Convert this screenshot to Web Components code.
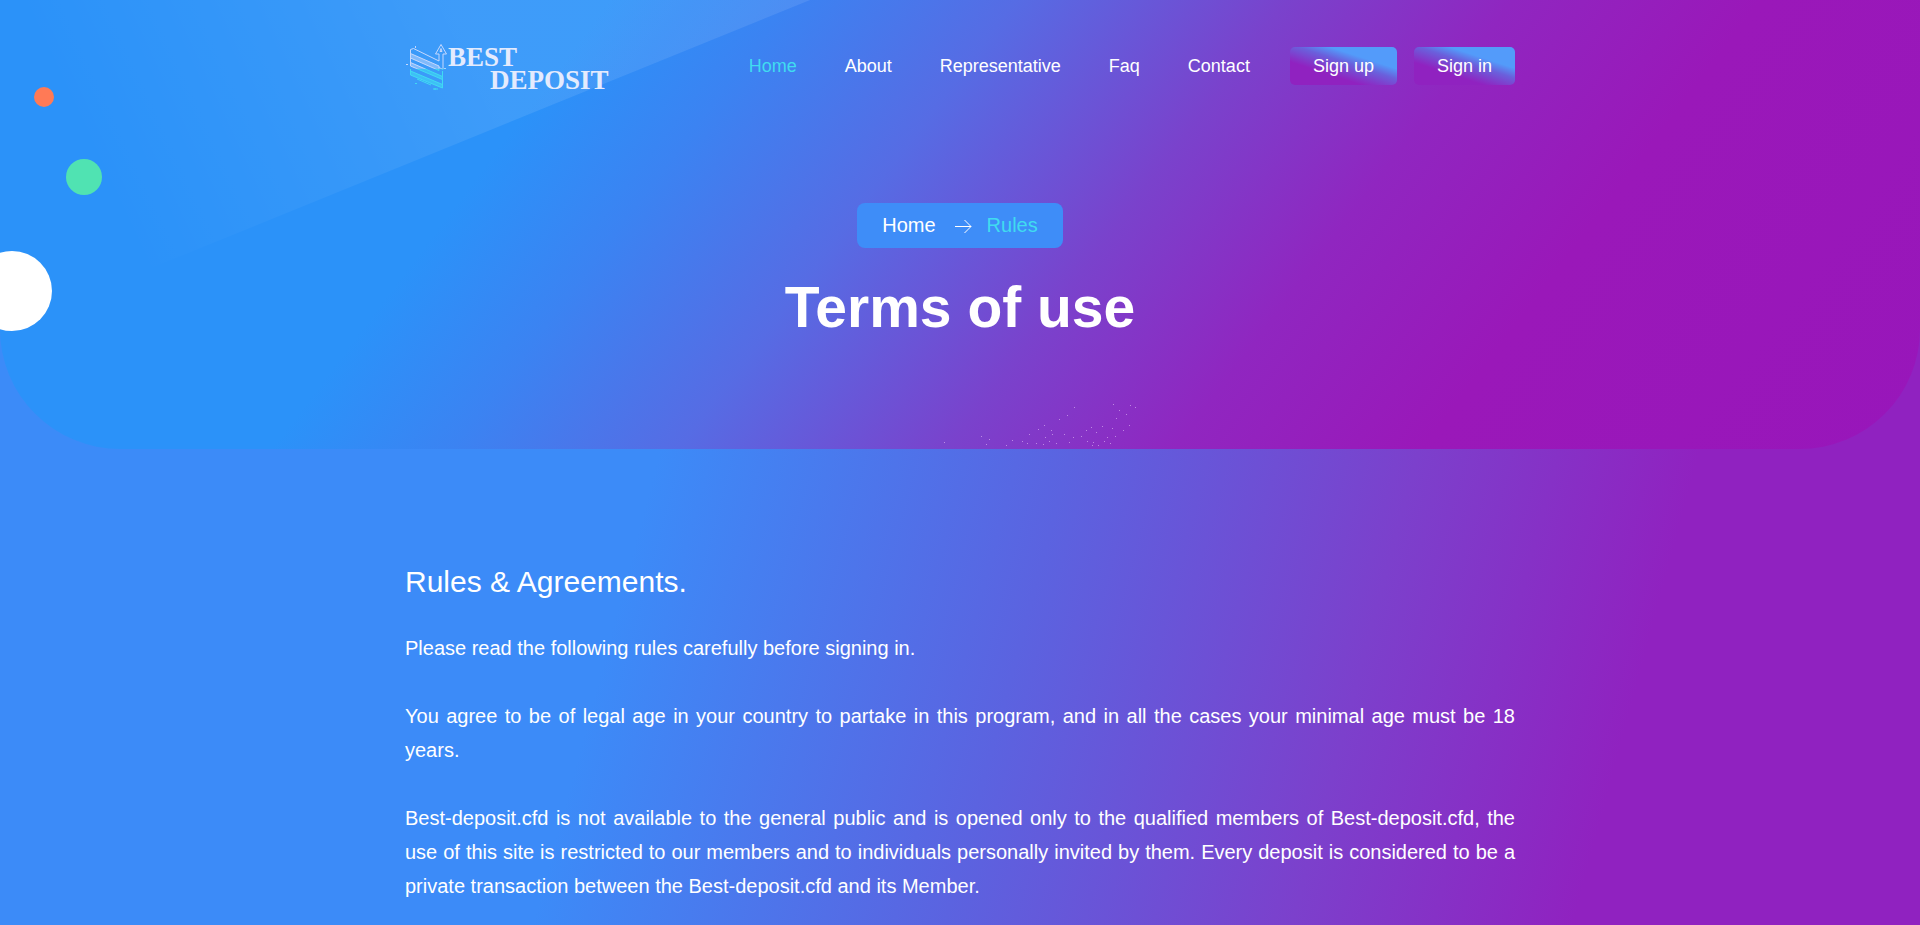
<!DOCTYPE html>
<html lang="en">
<head>
<meta charset="UTF-8">
<meta name="viewport" content="width=device-width, initial-scale=1">
<title>Best Deposit - Terms of use</title>
<style>
  :root {
    --sans: "Liberation Sans", Arial, sans-serif;
    --serif: "Liberation Serif", "Times New Roman", serif;
    --cyan: #40dcf0;
    --blue: #3c8bf8;
    --purple: #9022c0;
    --container: 1110px;
  }

  body {
    margin: 0;
    min-height: 100vh;
    font-family: var(--sans);
    font-size: 20px;
    line-height: 34px;
    color: #fff;
    background: linear-gradient(105deg, var(--blue) 36%, #5b63e0 55%, #7c40cc 71%, var(--purple) 84%);
  }
</style>
</head>
<body>

<page-hero>
  <site-header slot="header">
    <nav-link href="#home" active>Home</nav-link>
    <nav-link href="#about">About</nav-link>
    <nav-link href="#representative">Representative</nav-link>
    <nav-link href="#faq">Faq</nav-link>
    <nav-link href="#contact">Contact</nav-link>
    <action-button slot="actions">Sign up</action-button>
    <action-button slot="actions">Sign in</action-button>
  </site-header>
  <bread-crumb home="Home" current="Rules"></bread-crumb>
  <span slot="title">Terms of use</span>
</page-hero>

<rules-section>
  <span slot="title">Rules &amp; Agreements.</span>
  <p>Please read the following rules carefully before signing in.</p>
  <p>You agree to be of legal age in your country to partake in this program, and in all the cases your minimal age must be 18 years.</p>
  <p>Best-deposit.cfd is not available to the general public and is opened only to the qualified members of Best-deposit.cfd, the use of this site is restricted to our members and to individuals personally invited by them. Every deposit is considered to be a private transaction between the Best-deposit.cfd and its Member.</p>
</rules-section>

<script>
/**
 * <site-logo> — Brand mark and name
 */
class SiteLogo extends HTMLElement {
  connectedCallback() {
    this.attachShadow({ mode: 'open' }).innerHTML = `
      <style>
        :host { display: block; flex-shrink: 0; }
        a { display: block; }
        svg { display: block; }
        text {
          font-family: var(--serif);
          font-size: 27px;
          font-weight: 700;
          fill: #e4ebfd;
        }
      </style>
      <a href="#home" aria-label="Best Deposit">
        <svg width="206" height="56" viewBox="0 0 206 56" fill="none">
          <defs>
            <linearGradient id="ink" gradientUnits="userSpaceOnUse" x1="0" y1="0" x2="0" y2="56">
              <stop offset="0.54" stop-color="#c6d8fd"/>
              <stop offset="0.56" stop-color="#3fdaf2"/>
            </linearGradient>
            <linearGradient id="tint" gradientUnits="userSpaceOnUse" x1="0" y1="0" x2="0" y2="56">
              <stop offset="0.54" stop-color="#d3e0fd" stop-opacity="0.45"/>
              <stop offset="0.56" stop-color="#3fdaf2" stop-opacity="0.6"/>
            </linearGradient>
          </defs>
          <g stroke="url(#ink)" fill="url(#tint)">
            <path d="M5.500 15.500L34 28v4.500L5.500 20z"/>
            <path d="M5.500 24.500L37.500 38.500v3L5.500 28z"/>
            <path d="M5.500 33L37.500 46.500V50L5.500 37z"/>
          </g>
          <g stroke="url(#ink)">
            <path d="M5.500 20v-8.500l3-1L34 23V16h-3.500L36 6.500 41.500 16H38v15.500l-4-2"/>
            <path d="M5.500 20v5M5.500 31v3M37.500 33v14M12 41l14 6"/>
            <path d="M35 13.500l1-3 1 3z"/>
            <path d="M10.500 8v2M1 26.500h2M39 30.500h2M10 45.500h2M28 51h5M30 50v2"/>
          </g>
          <text><tspan x="43" y="28">BEST</tspan><tspan x="85" y="51">DEPOSIT</tspan></text>
        </svg>
      </a>
    `;
  }
}

/**
 * <nav-link> — Main menu entry
 * Attributes: href, active
 */
class NavLink extends HTMLElement {
  connectedCallback() {
    const href = this.getAttribute('href') || '#';

    this.attachShadow({ mode: 'open' }).innerHTML = `
      <style>
        :host { display: block; font-size: 18px; }
        a {
          color: #fff;
          text-decoration: none;
          transition: color 0.2s ease;
        }
        a:hover, :host([active]) a { color: var(--cyan); }
      </style>
      <a href="${href}"><slot></slot></a>
    `;
  }
}

/**
 * <action-button> — Gradient button of the header
 */
class ActionButton extends HTMLElement {
  connectedCallback() {
    this.attachShadow({ mode: 'open' }).innerHTML = `
      <style>
        :host { display: block; }
        button {
          display: block;
          padding: 0 23px;
          border: none;
          border-radius: 5px;
          font-family: var(--sans);
          font-size: 18px;
          line-height: 38px;
          color: #fff;
          white-space: nowrap;
          cursor: pointer;
          background: linear-gradient(18deg, var(--purple) 32%, #6a60dc 56%, #539bfa 70%);
        }
      </style>
      <button type="button"><slot></slot></button>
    `;
  }
}

/**
 * <site-header> — Logo, menu and action buttons
 */
class SiteHeader extends HTMLElement {
  connectedCallback() {
    this.attachShadow({ mode: 'open' }).innerHTML = `
      <style>
        :host { display: block; }
        header {
          display: flex;
          flex-wrap: wrap;
          align-items: center;
          justify-content: space-between;
          gap: 16px;
          max-width: var(--container);
          margin: 0 auto;
          padding: 38px 15px 0;
        }
        .menu {
          display: flex;
          flex-wrap: wrap;
          align-items: center;
          gap: 16px 40px;
        }
        nav { display: flex; flex-wrap: wrap; gap: 8px 48px; }
        .actions { display: flex; gap: 17px; }
      </style>
      <header>
        <site-logo></site-logo>
        <div class="menu">
          <nav aria-label="Main"><slot></slot></nav>
          <div class="actions"><slot name="actions"></slot></div>
        </div>
      </header>
    `;
  }
}

/**
 * <bread-crumb> — Path to the current page
 * Attributes: home, current
 */
class BreadCrumb extends HTMLElement {
  connectedCallback() {
    const home    = this.getAttribute('home')    || '';
    const current = this.getAttribute('current') || '';

    this.attachShadow({ mode: 'open' }).innerHTML = `
      <style>
        :host { display: block; }
        nav {
          display: flex;
          align-items: center;
          padding: 0 25px;
          border-radius: 8px;
          line-height: 45px;
          background: #3e8df8;
        }
        a { color: #fff; text-decoration: none; }
        svg { margin: 2px 15px 0 19px; }
        span { color: var(--cyan); }
      </style>
      <nav aria-label="Breadcrumb">
        <a href="#home">${home}</a>
        <svg width="17" height="15" viewBox="0 0 17 15" fill="none" stroke="#fff" aria-hidden="true">
          <path d="M0 7.500h16M9.500 1l6.500 6.500-6.500 6.500"/>
        </svg>
        <span aria-current="page">${current}</span>
      </nav>
    `;
  }
}

/**
 * <page-hero> — Rounded banner with floating circles
 */
class PageHero extends HTMLElement {
  connectedCallback() {
    this.attachShadow({ mode: 'open' }).innerHTML = `
      <style>
        :host { display: block; position: relative; }

        .banner {
          position: relative;
          overflow: hidden;
          padding-bottom: 108px;
          border-radius: 0 0 120px 120px;
          background: linear-gradient(127deg, #2b92f9 27%, #3b83f2 35%, #566ce4 45%, #7a42cc 57%, #9026c0 67%, #9a18b9 78%, #9816ba);
        }

        /* Decoration */
        .beam {
          position: absolute;
          top: 0;
          left: 0;
          width: 810px;
          height: 290px;
          background: linear-gradient(65deg, transparent 16%, rgba(255, 255, 255, 0.09) 62%);
          clip-path: polygon(0 0, 100% 0, 12% 100%, 0 100%);
        }
        .sparks {
          position: absolute;
          bottom: 0;
          left: 50%;
          width: 180px;
          height: 48px;
          overflow: visible;
          fill: rgba(214, 170, 240, 0.7);
        }
        .circle {
          position: absolute;
          border-radius: 50%;
        }
        .orange { top: 87px; left: 34px; width: 20px; height: 20px; background: #ff7a56; }
        .green { top: 159px; left: 66px; width: 36px; height: 36px; background: #50e3b2; }
        .white { top: 251px; left: -28px; width: 80px; height: 80px; background: #fff; }

        .content {
          position: relative;
          display: flex;
          flex-direction: column;
          align-items: center;
          gap: 25px;
          padding: 109px 15px 0;
        }
        h1 {
          margin: 0;
          font-size: 57px;
          font-weight: 700;
          line-height: 68px;
          text-align: center;
        }
        ::slotted(site-header) { position: relative; }
      </style>
      <div class="banner">
        <div class="beam"></div>
        <svg class="sparks" viewBox="960 401 180 48" aria-hidden="true"></svg>
        <slot name="header"></slot>
        <div class="content">
          <slot></slot>
          <h1><slot name="title"></slot></h1>
        </div>
      </div>
      <div class="circle orange"></div>
      <div class="circle green"></div>
      <div class="circle white"></div>
    `;

    this._drawSparks();
  }

  _drawSparks() {
    const points = [
      [944, 442], [981, 436], [989, 439], [986, 444], [1006, 445], [1012, 440],
      [1022, 441], [1027, 443], [1029, 434], [1036, 443], [1038, 429], [1044, 425],
      [1043, 444], [1045, 437], [1049, 441], [1051, 430], [1052, 434], [1056, 443],
      [1059, 419], [1067, 415], [1074, 407], [1064, 434], [1069, 442], [1073, 437],
      [1081, 436], [1086, 430], [1087, 441], [1091, 427], [1092, 445], [1093, 442],
      [1096, 432], [1098, 445], [1102, 426], [1104, 441], [1107, 437], [1110, 443],
      [1112, 428], [1113, 404], [1115, 436], [1116, 418], [1119, 410], [1123, 430],
      [1126, 414], [1129, 425], [1130, 405], [1135, 407]
    ];
    const svg = this.shadowRoot.querySelector('.sparks');
    svg.innerHTML = points.map(([x, y]) => `<rect x="${x}" y="${y}" width="1" height="1"/>`).join('');
  }
}

/**
 * <rules-section> — Text block with the rules
 */
class RulesSection extends HTMLElement {
  connectedCallback() {
    this.attachShadow({ mode: 'open' }).innerHTML = `
      <style>
        :host { display: block; }
        section {
          max-width: var(--container);
          margin: 0 auto;
          padding: 115px 15px 12px;
          text-align: justify;
        }
        h2 {
          margin: 0 0 31px;
          font-size: 30px;
          font-weight: 400;
          line-height: 36px;
        }
        ::slotted(p) { margin: 0 0 34px; }
        ::slotted(p:last-child) { margin-bottom: 0; }
      </style>
      <section>
        <h2><slot name="title"></slot></h2>
        <slot></slot>
      </section>
    `;
  }
}

customElements.define('site-logo', SiteLogo);
customElements.define('nav-link', NavLink);
customElements.define('action-button', ActionButton);
customElements.define('site-header', SiteHeader);
customElements.define('bread-crumb', BreadCrumb);
customElements.define('page-hero', PageHero);
customElements.define('rules-section', RulesSection);
</script>
</body>
</html>
